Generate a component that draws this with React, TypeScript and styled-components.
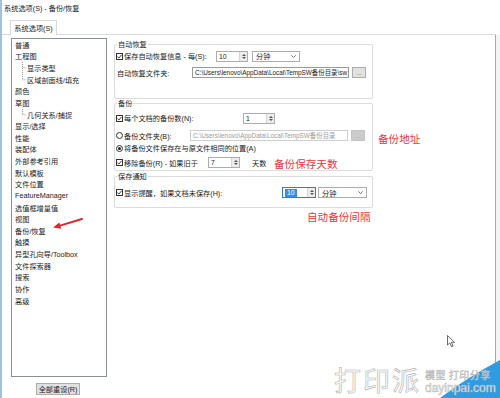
import React from "react";
import styled, { createGlobalStyle } from "styled-components";

const FONT = `"Liberation Sans", "Noto Sans CJK SC", sans-serif`;

const Global = createGlobalStyle`
  html, body { margin: 0; padding: 0; background: #fff; }
  body { width: 500px; height: 398px; overflow: hidden; font-family: ${FONT}; }
  * { box-sizing: border-box; }
`;

const Window = styled.div`
  position: relative;
  width: 500px;
  height: 398px;
  display: flex;
  flex-direction: column;
  background: #fff;
  border-left: 2px solid #9cc2e6;
  font-family: ${FONT};
  font-size: 7.2px;
  color: #1b1b1b;
  overflow: hidden;
`;

const TitleBar = styled.div`
  height: 15px;
  padding-left: 2px;
  display: flex;
  align-items: center;
  white-space: nowrap;
`;

const TabStrip = styled.div`
  height: 20px;
  width: 494px;
  display: flex;
  align-items: flex-end;
  padding-left: 8px;
  border-bottom: 1px solid #d9d9d9;
`;

const Tab = styled.div`
  width: 47px;
  height: 15px;
  margin-bottom: -1px;
  border: 1px solid #d9d9d9;
  border-bottom: none;
  background: #fff;
  display: flex;
  align-items: center;
  justify-content: center;
  white-space: nowrap;
`;

const Body = styled.div`
  flex: 1;
  display: flex;
  min-height: 0;
`;

const Panel = styled.div`
  width: 494px;
  display: flex;
  border-right: 1px solid #a8a8a8;
`;

const LeftCol = styled.div`
  width: 105px;
  display: flex;
  flex-direction: column;
  align-items: flex-start;
  padding: 3px 0 0 9px;
`;

const Tree = styled.div`
  width: 96px;
  height: 339px;
  border: 1px solid #8a8f98;
  background: #fff;
  display: flex;
  flex-direction: column;
`;

const TreeItem = styled.div<{ $child?: boolean }>`
  height: 11.64px;
  flex: none;
  display: flex;
  align-items: center;
  padding-left: 3px;
  white-space: nowrap;
`;

const ResetButton = styled.div`
  margin: 6px 0 0 25px;
  width: 44px;
  height: 12px;
  border: 1px solid #adadad;
  background: #e1e1e1;
  display: flex;
  align-items: center;
  justify-content: center;
  white-space: nowrap;
`;

const RightCol = styled.div`
  flex: 1;
  display: flex;
  flex-direction: column;
  padding: 9px 0 0 7px;
`;

const Group = styled.div<{ $h: number; $mt: number }>`
  width: 259px;
  height: ${(p) => p.$h}px;
  margin-top: ${(p) => p.$mt}px;
  border: 1px solid #dcdcdc;
  border-radius: 2px;
  padding-left: 1px;
  display: flex;
  flex-direction: column;
`;

const GroupTitle = styled.div`
  margin: -5px 0 0 1px;
  padding: 0 1px;
  width: fit-content;
  background: #fff;
  line-height: 10px;
  height: 10px;
  white-space: nowrap;
`;

const Row = styled.div<{ $mt: number }>`
  height: 11px;
  margin-top: ${(p) => p.$mt}px;
  display: flex;
  align-items: center;
  white-space: nowrap;
`;

const Label = styled.div<{ $w?: number; $indent?: boolean; $ml?: number }>`
  ${(p) => (p.$w ? `width: ${p.$w}px;` : "")}
  flex: none;
  display: flex;
  align-items: center;
  padding-left: ${(p) => (p.$indent ? 1 : 0)}px;
  margin-left: ${(p) => p.$ml ?? 0}px;
  white-space: nowrap;
`;

const Box = styled.span`
  width: 7px;
  height: 7px;
  flex: none;
  border: 1px solid #333;
  background: #fff;
  margin-right: 1px;
  display: inline-flex;
`;

const Radio = styled.span<{ $on?: boolean }>`
  width: 7px;
  height: 7px;
  flex: none;
  border: 1px solid #333;
  border-radius: 50%;
  background: #fff;
  margin-right: 1px;
  display: inline-flex;
  align-items: center;
  justify-content: center;
  &::after {
    content: "";
    width: 3px;
    height: 3px;
    border-radius: 50%;
    background: ${(p) => (p.$on ? "#222" : "transparent")};
  }
`;

const SpinBox = styled.div<{ $w: number; $focus?: boolean }>`
  width: ${(p) => p.$w}px;
  height: 11px;
  flex: none;
  border: 1px solid ${(p) => (p.$focus ? "#2a7fd4" : "#abadb3")};
  background: #fff;
  display: flex;
`;

const SpinValue = styled.div`
  flex: 1;
  padding-left: 2px;
  display: flex;
  align-items: center;
  font-size: 6.8px;
`;

const SpinSel = styled.span`
  background: #3390ea;
  color: #fff;
  padding: 0 2px;
  line-height: 8px;
`;

const SpinArrows = styled.div`
  width: 8px;
  border-left: 1px solid #d6d6d6;
  background: #ececec;
  display: flex;
  flex-direction: column;
  align-items: center;
  justify-content: center;
  gap: 1px;
`;

const Tri = styled.span<{ $up?: boolean }>`
  width: 0;
  height: 0;
  border-left: 2px solid transparent;
  border-right: 2px solid transparent;
  ${(p) => (p.$up ? "border-bottom: 2px solid #555;" : "border-top: 2px solid #555;")}
`;

const Select = styled.div<{ $w: number; $ml: number }>`
  width: ${(p) => p.$w}px;
  height: 11px;
  margin-left: ${(p) => p.$ml}px;
  flex: none;
  border: 1px solid #abadb3;
  background: #fff;
  display: flex;
  align-items: center;
  justify-content: space-between;
  padding: 0 3px 0 3px;
`;

const Field = styled.div<{ $w: number; $disabled?: boolean }>`
  width: ${(p) => p.$w}px;
  height: 11px;
  flex: none;
  border: 1px solid ${(p) => (p.$disabled ? "#cfcfcf" : "#9a9a9a")};
  background: #fff;
  color: ${(p) => (p.$disabled ? "#9c9c9c" : "#1b1b1b")};
  font-size: 6.4px;
  padding-left: 2px;
  display: flex;
  align-items: center;
  overflow: hidden;
  white-space: nowrap;
`;

const Ellipsis = styled.div<{ $disabled?: boolean }>`
  width: 14px;
  height: 11px;
  margin-left: 3px;
  flex: none;
  border: 1px solid ${(p) => (p.$disabled ? "#c4c4c4" : "#adadad")};
  background: ${(p) => (p.$disabled ? "#cccccc" : "#e1e1e1")};
  color: ${(p) => (p.$disabled ? "#9a9a9a" : "#333")};
  font-size: 6px;
  display: flex;
  align-items: center;
  justify-content: center;
  line-height: 6px;
`;

const RightGap = styled.div`
  flex: 1;
  background: #f4f4f4;
`;

const Note = styled.div<{ $x: number; $y: number }>`
  position: absolute;
  left: ${(p) => p.$x}px;
  top: ${(p) => p.$y}px;
  color: #e8373b;
  font-family: "Noto Sans CJK SC", sans-serif;
  font-size: 10.6px;
  line-height: 12px;
  white-space: nowrap;
`;

const Overlay = styled.svg<{ $x: number; $y: number }>`
  position: absolute;
  left: ${(p) => p.$x}px;
  top: ${(p) => p.$y}px;
  overflow: visible;
`;

const Watermark = styled.div`
  position: absolute;
  left: 332px;
  top: 366px;
  display: flex;
  align-items: flex-start;
  gap: 4px;
  white-space: nowrap;
`;

const WmBig = styled.div`
  font-family: "Noto Sans CJK SC", sans-serif;
  font-size: 27px;
  line-height: 28px;
  letter-spacing: 2px;
  color: #fbfbfb;
  -webkit-text-stroke: 0.6px #b4b4b4;
`;

const WmSmall = styled.div`
  display: flex;
  flex-direction: column;
  padding-top: 3px;
`;

const WmLine1 = styled.div`
  font-family: "Noto Sans CJK SC", sans-serif;
  font-size: 10px;
  line-height: 12px;
  color: #fafafa;
  -webkit-text-stroke: 0.5px #b4b4b4;
  letter-spacing: 0.5px;
`;

const WmLine2 = styled.div`
  font-family: "Liberation Sans", sans-serif;
  font-size: 12px;
  line-height: 14px;
  color: #fafafa;
  -webkit-text-stroke: 0.5px #b4b4b4;
`;

const Checkmark = () => (
  <svg width="5" height="5" viewBox="0 0 5 5">
    <path d="M0.4 2.6 L1.9 4 L4.6 0.8" fill="none" stroke="#222" strokeWidth="0.9" />
  </svg>
);

const CheckBox = () => (
  <Box>
    <Checkmark />
  </Box>
);

const Spin: React.FC<{ w: number; value: string; focus?: boolean }> = ({ w, value, focus }) => (
  <SpinBox $w={w} $focus={focus}>
    <SpinValue>{focus ? <SpinSel>{value}</SpinSel> : value}</SpinValue>
    <SpinArrows>
      <Tri $up />
      <Tri />
    </SpinArrows>
  </SpinBox>
);

const Chevron = () => (
  <svg width="5" height="3" viewBox="0 0 5 3">
    <polyline points="0.3,0.3 2.5,2.5 4.7,0.3" fill="none" stroke="#555" strokeWidth="0.8" />
  </svg>
);

const Connector: React.FC<{ last?: boolean }> = ({ last }) => (
  <svg width="12" height="11.64" viewBox="0 0 12 11.64" style={{ flex: "none" }}>
    <line x1="7.5" y1="0" x2="7.5" y2={last ? 5.8 : 11.64} stroke="#9a9a9a" strokeWidth="1" strokeDasharray="1 1" />
    <line x1="7.5" y1="5.8" x2="11.5" y2="5.8" stroke="#9a9a9a" strokeWidth="1" strokeDasharray="1 1" />
  </svg>
);

type Item = { t: string; child?: boolean; last?: boolean };
const items: Item[] = [
  { t: "普通" },
  { t: "工程图" },
  { t: "显示类型", child: true },
  { t: "区域剖面线/填充", child: true, last: true },
  { t: "颜色" },
  { t: "草图" },
  { t: "几何关系/捕捉", child: true, last: true },
  { t: "显示/选择" },
  { t: "性能" },
  { t: "装配体" },
  { t: "外部参考引用" },
  { t: "默认模板" },
  { t: "文件位置" },
  { t: "FeatureManager" },
  { t: "选值框增量值" },
  { t: "视图" },
  { t: "备份/恢复" },
  { t: "触摸" },
  { t: "异型孔向导/Toolbox" },
  { t: "文件探索器" },
  { t: "搜索" },
  { t: "协作" },
  { t: "高级" },
];

const PATH = "C:\\Users\\lenovo\\AppData\\Local\\TempSW备份目录\\sw";
const PATH2 = "C:\\Users\\lenovo\\AppData\\Local\\TempSW备份目录";

export default function App() {
  return (
    <>
      <Global />
      <Window>
        <TitleBar>系统选项(S) - 备份/恢复</TitleBar>
        <TabStrip>
          <Tab>系统选项(S)</Tab>
        </TabStrip>
        <Body>
          <Panel>
            <LeftCol>
              <Tree>
                {items.map((it) => (
                  <TreeItem key={it.t} $child={it.child}>
                    {it.child && <Connector last={it.last} />}
                    {it.t}
                  </TreeItem>
                ))}
              </Tree>
              <ResetButton>全部重设(R)</ResetButton>
            </LeftCol>
            <RightCol>
              <Group $h={55} $mt={0}>
                <GroupTitle>自动恢复</GroupTitle>
                <Row $mt={0.5}>
                  <Label $w={100}>
                    <CheckBox />
                    保存自动恢复信息 - 每(S):
                  </Label>
                  <Spin w={32} value="10" />
                  <Select $w={48} $ml={4}>
                    分钟
                    <Chevron />
                  </Select>
                </Row>
                <Row $mt={5.5}>
                  <Label $w={76} $indent>
                    自动恢复文件夹:
                  </Label>
                  <Field $w={157}>{PATH}</Field>
                  <Ellipsis>...</Ellipsis>
                </Row>
              </Group>

              <Group $h={68} $mt={4}>
                <GroupTitle>备份</GroupTitle>
                <Row $mt={3.5}>
                  <Label $w={127}>
                    <CheckBox />
                    每个文档的备份数(N):
                  </Label>
                  <Spin w={32} value="1" />
                </Row>
                <Row $mt={6.5}>
                  <Label $w={74}>
                    <Radio />
                    备份文件夹(B):
                  </Label>
                  <Field $w={158} $disabled>
                    {PATH2}
                  </Field>
                  <Ellipsis $disabled>...</Ellipsis>
                </Row>
                <Row $mt={1.5}>
                  <Label>
                    <Radio $on />
                    将备份文件保存在与原文件相同的位置(A)
                  </Label>
                </Row>
                <Row $mt={3.5}>
                  <Label $w={92}>
                    <CheckBox />
                    移除备份(R) - 如果旧于
                  </Label>
                  <Spin w={32} value="7" />
                  <Label $ml={12}>天数</Label>
                </Row>
              </Group>

              <Group $h={32} $mt={5}>
                <GroupTitle>保存通知</GroupTitle>
                <Row $mt={5}>
                  <Label $w={166}>
                    <CheckBox />
                    显示提醒，如果文档未保存(H):
                  </Label>
                  <Spin w={34} value="10" focus />
                  <Select $w={49} $ml={2}>
                    分钟
                    <Chevron />
                  </Select>
                </Row>
              </Group>
            </RightCol>
          </Panel>
          <RightGap />
        </Body>

        <Note $x={376} $y={133}>备份地址</Note>
        <Note $x={272} $y={158}>备份保存天数</Note>
        <Note $x={305} $y={211}>自动备份间隔</Note>

        <Overlay $x={46} $y={213} width="38" height="20" viewBox="0 0 38 20">
          <line x1="34" y1="6" x2="12" y2="12.6" stroke="#e3262b" strokeWidth="2" strokeLinecap="round" />
          <polygon points="5,14.6 13.2,15.8 11.4,9.4" fill="#e3262b" />
        </Overlay>

        <Overlay $x={428} $y={355} width="72" height="43" viewBox="0 0 72 43">
          <path d="M10 43 Q38 22 72 4 L72 43 Z" fill="#2f9be0" />
        </Overlay>

        <Watermark>
          <WmBig>打印派</WmBig>
          <WmSmall>
            <WmLine1>模型 打印分享</WmLine1>
            <WmLine2>dayinpai.com</WmLine2>
          </WmSmall>
        </Watermark>

        <Overlay $x={445} $y={335} width="9" height="13" viewBox="0 0 9 13">
          <path d="M0.5 0.5 L0.5 10 L2.8 7.9 L4.6 11.8 L6.1 11.1 L4.4 7.3 L7.5 7.3 Z" fill="#fff" stroke="#444" strokeWidth="0.8" />
        </Overlay>
      </Window>
    </>
  );
}
